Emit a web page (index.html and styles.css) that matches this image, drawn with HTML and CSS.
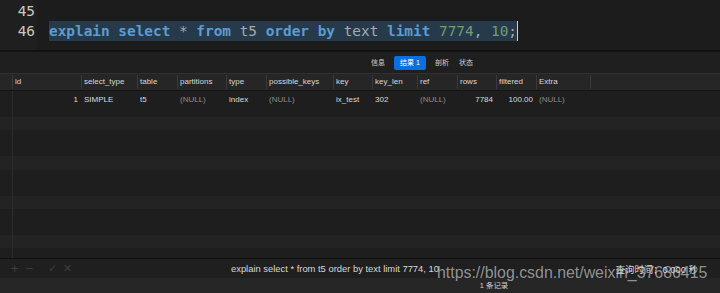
FILE: index.html
```html
<!DOCTYPE html>
<html lang="zh">
<head>
    <meta charset="UTF-8">
    <title>explain</title>
    <link rel="stylesheet" href="styles.css">
</head>
<body>
    <div class="editor">
        <div class="gutter">
            <div class="ln">45</div>
            <div class="ln">46</div>
        </div>
        <div class="code">
            <div class="line"></div>
            <div class="line"><span class="sel"><span class="kw">explain</span> <span class="kw">select</span> <span class="op">*</span> <span class="kw">from</span> <span class="id">t5</span> <span class="kw">order</span> <span class="kw">by</span> <span class="id">text</span> <span class="kw">limit</span> <span class="num">7774</span><span class="op">,</span> <span class="num">10</span><span class="op">;</span></span><span class="caret"></span></div>
        </div>
    </div>

    <div class="tabs">
        <span class="tab">信息</span>
        <span class="tab active">结果 1</span>
        <span class="tab">剖析</span>
        <span class="tab">状态</span>
    </div>

    <div class="grid head">
        <div></div>
        <div>id</div>
        <div>select_type</div>
        <div>table</div>
        <div>partitions</div>
        <div>type</div>
        <div>possible_keys</div>
        <div>key</div>
        <div>key_len</div>
        <div>ref</div>
        <div>rows</div>
        <div>filtered</div>
        <div>Extra</div>
        <div class="fill"></div>
    </div>

    <div class="results">
        <div class="grid row">
            <div></div>
            <div class="r">1</div>
            <div>SIMPLE</div>
            <div>t5</div>
            <div class="null">(NULL)</div>
            <div>index</div>
            <div class="null">(NULL)</div>
            <div>ix_test</div>
            <div>302</div>
            <div class="null">(NULL)</div>
            <div class="r">7784</div>
            <div class="r">100.00</div>
            <div class="null">(NULL)</div>
            <div class="fill"></div>
        </div>
    </div>

    <div class="actions">
        <div class="btns">
            <span class="ico">+</span>
            <span class="ico">&minus;</span>
            <span class="ico gap">&#10003;</span>
            <span class="ico">&#10005;</span>
        </div>
        <div class="query">explain select * from t5 order by text limit 7774, 10</div>
        <div class="time">查询时间：0.000 秒</div>
    </div>

    <div class="status">1 条记录</div>

    <div class="watermark">https://blog.csdn.net/weixin_37686415</div>
</body>
</html>
```

FILE: styles.css
```css
body {
    margin: 0;
    width: 720px;
    height: 293px;
    overflow: hidden;
    position: relative;
    background: #1e1e1e;
    font-family: "Liberation Sans", "Noto Sans CJK SC", sans-serif;
    color: #d4d4d4;
}

.editor {
    display: flex;
    height: 50px;
    background: #1c1c1c;
    border-bottom: 2px solid #121212;
    font-family: "DejaVu Sans Mono", monospace;
    font-size: 14.4px;
}

.gutter {
    width: 37px;
    padding-top: 1px;
    background: #1f1f1f;
}

.ln {
    height: 20px;
    line-height: 20px;
    text-align: right;
    padding-right: 2px;
    color: #c8c8c8;
}

.code {
    padding-top: 1px;
    padding-left: 12px;
}

.line {
    height: 20px;
    line-height: 20px;
    white-space: pre;
    display: flex;
}

.sel {
    background: #263a4c;
}

.kw { color: #5d9cd0; font-weight: bold; }
.id { color: #a9a9a9; }
.op { color: #a9a9a9; }
.num { color: #6f9f6f; }

.caret {
    width: 1px;
    height: 20px;
    background: #d0d0d0;
}

.tabs {
    height: 21px;
    display: flex;
    align-items: center;
    justify-content: center;
    padding-left: 124px;
    background: #1f1f1f;
    border-bottom: 1px solid #303030;
    font-size: 7px;
    color: #d0d0d0;
}

.tab {
    padding: 0 5px;
    line-height: 14px;
    border-radius: 2px;
}

.tab.active {
    background: #0a6fe0;
    color: #fff;
    padding: 0 6px;
    margin: 0 4px;
}

.grid {
    display: grid;
    grid-template-columns: 12px 69px 56px 40px 49px 40px 67px 39px 45px 40px 39px 40px 54px 1fr;
    font-size: 8px;
}

.head {
    height: 16px;
    line-height: 16px;
    background: #262626;
    border-bottom: 1px solid #151515;
    color: #d8d8d8;
}

.head > div {
    border-left: 1px solid #3a3a3a;
    padding-left: 2px;
    margin: 1px 0;
    line-height: 14px;
}

.head > div:first-child {
    border-left: none;
}

.results {
    height: 167px;
    background:
        linear-gradient(#2c2c2c, #2c2c2c) 12px 0 / 1px 100% no-repeat,
        repeating-linear-gradient(#1e1e1e 0, #1e1e1e 26px, #232323 26px, #232323 39.3px);
}

.row {
    height: 17px;
    line-height: 17px;
    color: #dcdcdc;
}

.row > div {
    padding: 0 3px;
    white-space: nowrap;
}

.row .r {
    text-align: right;
}

.row .null {
    color: #8c8c8c;
}

.actions {
    height: 19px;
    display: flex;
    align-items: center;
    border-top: 1px solid #111;
    background: #1f1f1f;
    font-size: 9.4px;
}

.btns {
    width: 231px;
    display: flex;
    align-items: center;
    padding-left: 7px;
    box-sizing: border-box;
}

.ico {
    color: #3e3e3e;
    font-size: 11px;
    width: 15px;
    text-align: center;
    font-family: "DejaVu Sans", sans-serif;
}

.ico.gap {
    margin-left: 8px;
}

.query {
    color: #d8d8d8;
    white-space: nowrap;
}

.time {
    margin-left: auto;
    margin-right: 22px;
    color: #d8d8d8;
    white-space: nowrap;
}

.status {
    height: 15px;
    line-height: 15px;
    background: #262626;
    text-align: center;
    font-size: 7.4px;
    color: #d0d0d0;
    padding-left: 268px;
    box-sizing: border-box;
}

.watermark {
    position: absolute;
    left: 437px;
    top: 264px;
    font-size: 15.9px;
    color: rgba(220, 220, 220, 0.62);
    white-space: nowrap;
}
```
